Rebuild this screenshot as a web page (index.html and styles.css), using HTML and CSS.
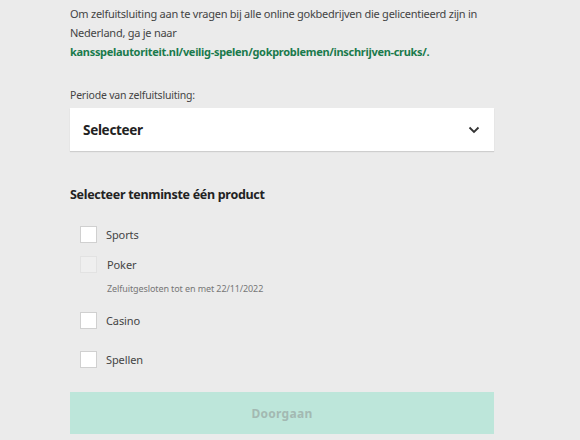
FILE: index.html
```html
<!DOCTYPE html>
<html lang="nl">
<head>
<meta charset="utf-8">
<link rel="stylesheet" href="styles.css">
</head>
<body>
<main class="page">
  <p class="intro">Om zelfuitsluiting aan te vragen bij alle online gokbedrijven die gelicentieerd zijn in Nederland, ga je naar<br><a class="link" href="#">kansspelautoriteit.nl/veilig-spelen/gokproblemen/inschrijven-cruks/.</a></p>

  <label class="field-label">Periode van zelfuitsluiting:</label>
  <div class="select">
    <span class="select-value">Selecteer</span>
    <svg class="chevron" width="12" height="8" viewBox="0 0 12 8"><path d="M1.5 1.5 L6 6 L10.5 1.5" fill="none" stroke="#333" stroke-width="1.8"/></svg>
  </div>

  <h2 class="section-title">Selecteer tenminste één product</h2>

  <ul class="products">
    <li class="product"><span class="box"></span><span class="name">Sports</span></li>
    <li class="product disabled"><span class="box"></span><span class="name">Poker</span></li>
    <li class="note">Zelfuitgesloten tot en met 22/11/2022</li>
    <li class="product"><span class="box"></span><span class="name">Casino</span></li>
    <li class="product"><span class="box"></span><span class="name">Spellen</span></li>
  </ul>

  <button class="submit" disabled>Doorgaan</button>
</main>
</body>
</html>
```

FILE: styles.css
```css
html, body {
  margin: 0;
  padding: 0;
  background: #ebebeb;
}
body {
  font-family: "Noto Sans", "Open Sans", sans-serif;
  color: #333;
}
.page {
  width: 424px;
  padding: 4px 0 0 70px;
}
.intro {
  margin: 0;
  font-size: 11px;
  line-height: 19px;
  color: #444;
  letter-spacing: -0.25px;
}
.link {
  color: #1a7a4c;
  font-weight: 700;
  text-decoration: none;
  white-space: nowrap;
  letter-spacing: -0.3px;
}
.field-label {
  display: block;
  margin-top: 26px;
  font-size: 10.5px;
  line-height: 16px;
  color: #444;
  letter-spacing: -0.2px;
}
.select {
  margin-top: 5px;
  height: 43px;
  background: #fff;
  box-shadow: 0 1px 1px rgba(0,0,0,0.12);
  display: flex;
  align-items: center;
  justify-content: space-between;
  padding: 0 14px 0 13px;
}
.select-value {
  font-size: 13.5px;
  font-weight: 700;
  color: #222;
  letter-spacing: -0.3px;
}
.chevron {
  display: block;
}
.section-title {
  margin: 35px 0 0;
  font-size: 12.5px;
  line-height: 18px;
  font-weight: 700;
  color: #222;
  letter-spacing: -0.3px;
}
.products {
  list-style: none;
  margin: 21px 0 0;
  padding: 0 0 0 10px;
}
.product {
  display: flex;
  align-items: center;
  gap: 9px;
  height: 18px;
  font-size: 11px;
  color: #444;
  letter-spacing: -0.1px;
}
.products li:nth-child(2) { margin-top: 12px; }
.products li:nth-child(4) { margin-top: 16px; }
.products li:nth-child(5) { margin-top: 21px; }
.box {
  width: 15px;
  height: 15px;
  background: #fff;
  border: 1px solid #d0d0d0;
  flex: none;
}
.disabled .box {
  background: #efefef;
  border-color: #e2e2e2;
}
.disabled .name {
  margin-left: 1px;
}
.note {
  margin: 10px 0 0 27px;
  font-size: 9px;
  line-height: 12px;
  color: #777;
  letter-spacing: -0.1px;
}
.submit {
  display: block;
  margin-top: 24px;
  width: 424px;
  height: 42px;
  border: 0;
  background: #bde6da;
  color: #a3b9b2;
  font-family: inherit;
  font-size: 12px;
  font-weight: 700;
  letter-spacing: 0.3px;
}
```
